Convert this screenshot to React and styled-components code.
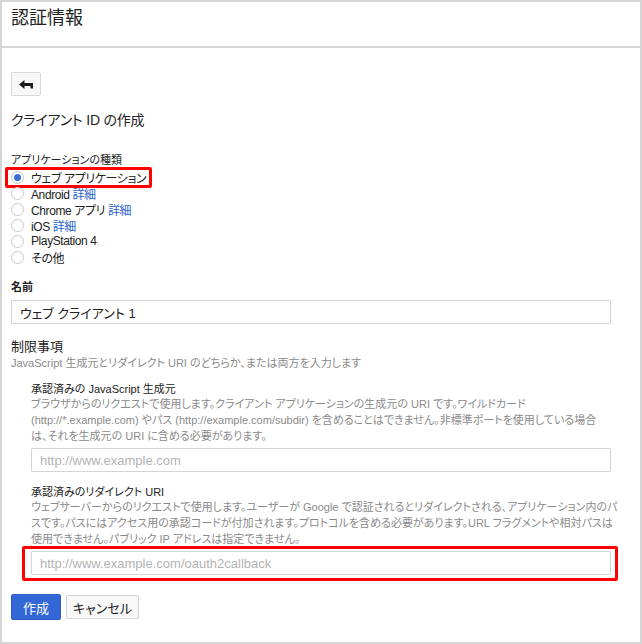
import React from "react";
import styled, { createGlobalStyle } from "styled-components";

const Global = createGlobalStyle`
  html, body { margin: 0; padding: 0; background: #fff; }
  body {
    font-family: "Liberation Sans", Arial, "Noto Sans CJK JP", sans-serif;
    color: #222;
    font-feature-settings: "palt";
  }
  * { box-sizing: border-box; }
  input, button { font-feature-settings: "palt"; }
`;

const Frame = styled.div`
  width: 642px;
  height: 644px;
  border: 2px solid #d6d6d6;
  display: flex;
  flex-direction: column;
`;

const Header = styled.header`
  height: 46px;
  border-bottom: 2px solid #d6d6d6;
  padding: 5px 0 0 9px;
`;

const Title = styled.h1`
  margin: 0;
  font-size: 18px;
  font-weight: 400;
  color: #222;
  line-height: 22px;
`;

const Body = styled.main`
  padding: 24px 30px 0 9px;
  display: flex;
  flex-direction: column;
`;

const BackButton = styled.button`
  width: 30px;
  height: 24px;
  border: 1px solid #d9d9d9;
  border-radius: 2px;
  background: #f8f8f8;
  display: flex;
  align-items: center;
  justify-content: center;
  padding: 0;
`;

const PageHeading = styled.h2`
  margin: 14px 0 0;
  font-size: 14px;
  font-weight: 400;
  line-height: 20px;
  letter-spacing: -0.2px;
`;

const Label = styled.div`
  font-size: 11px;
  font-weight: ${(p) => (p.$bold ? 700 : 400)};
  color: #222;
  line-height: 14px;
  margin-top: ${(p) => p.$mt || 0}px;
`;

const RadioGroup = styled.div`
  display: flex;
  flex-direction: column;
  margin-top: 2px;
`;

const RadioRow = styled.label`
  position: relative;
  display: flex;
  align-items: center;
  height: 16px;
  font-size: 12px;
  letter-spacing: -0.4px;
  color: #222;
  gap: 7px;
`;

const Highlight = styled.span`
  position: absolute;
  left: -6px;
  top: -2px;
  width: 147px;
  height: 21px;
  border: 3px solid #f00;
  border-radius: 2px;
  pointer-events: none;
`;

const Circle = styled.span`
  width: 13px;
  height: 13px;
  border-radius: 50%;
  border: 1px solid #c8c8c8;
  background: #fff;
  display: flex;
  align-items: center;
  justify-content: center;
  &::after {
    content: "";
    width: 7px;
    height: 7px;
    border-radius: 50%;
    background: ${(p) => (p.$checked ? "#3a6fd8" : "transparent")};
  }
`;

const Link = styled.span`
  color: #2a62c9;
`;

const TextInput = styled.input`
  width: ${(p) => p.$w || 600}px;
  height: 24px;
  border: 1px solid #d4d4d4;
  border-radius: 1px;
  padding: 0 8px;
  font-family: inherit;
  font-size: 13px;
  color: #222;
  margin-top: ${(p) => p.$mt || 0}px;
  outline: none;
  &::placeholder { color: #b3b3b3; }
`;

const SectionTitle = styled.div`
  font-size: 13px;
  margin-top: 15px;
  line-height: 16px;
`;

const Help = styled.div`
  font-size: 11px;
  color: #8a8a8a;
  line-height: 16px;
  white-space: nowrap;
`;

const Sub = styled.section`
  margin-left: 20px;
  margin-top: ${(p) => p.$mt}px;
  display: flex;
  flex-direction: column;
`;

const SubTitle = styled.div`
  font-size: 11px;
  color: #222;
  line-height: 13px;
`;

const RedBox = styled.div`
  margin: -1px 0 0 -9px;
  width: 596px;
  border: 3px solid #f00;
  border-radius: 2px;
  padding: 2px 4px 3px 6px;
`;

const Actions = styled.div`
  display: flex;
  gap: 5px;
  margin-top: 13px;
  align-items: flex-start;
`;

const Button = styled.button`
  width: ${(p) => (p.$primary ? 50 : 73)}px;
  height: ${(p) => (p.$primary ? 26 : 24)}px;
  margin-top: ${(p) => (p.$primary ? 0 : 1)}px;
  padding: 0;
  font-family: inherit;
  font-size: 13px;
  border-radius: 2px;
  border: 1px solid ${(p) => (p.$primary ? "#2c5ec4" : "#d4d4d4")};
  background: ${(p) => (p.$primary ? "#3367d6" : "#f8f8f8")};
  color: ${(p) => (p.$primary ? "#fff" : "#222")};
`;

const BackIcon = () => (
  <svg width="15" height="9" viewBox="0 0 15 9">
    <path d="M0 4.5 L5.5 0 V3 H14 V8.5 H11.5 V6 H5.5 V9 Z" fill="#1a1a1a" />
  </svg>
);

const types = [
  { t: "ウェブ アプリケーション", checked: true },
  { t: "Android ", link: "詳細" },
  { t: "Chrome アプリ ", link: "詳細" },
  { t: "iOS ", link: "詳細" },
  { t: "PlayStation 4" },
  { t: "その他" },
];

export default function App() {
  return (
    <>
      <Global />
      <Frame>
        <Header>
          <Title>認証情報</Title>
        </Header>
        <Body>
          <BackButton aria-label="戻る">
            <BackIcon />
          </BackButton>
          <PageHeading>クライアント ID の作成</PageHeading>
          <Label $mt={23}>アプリケーションの種類</Label>
          <RadioGroup>
            {types.map((r, i) => (
              <RadioRow key={i}>
                {r.checked && <Highlight />}
                <Circle $checked={r.checked} />
                <span>
                  {r.t}
                  {r.link && <Link>{r.link}</Link>}
                </span>
              </RadioRow>
            ))}
          </RadioGroup>
          <Label $bold $mt={15}>名前</Label>
          <TextInput $mt={6} defaultValue="ウェブ クライアント 1" />
          <SectionTitle>制限事項</SectionTitle>
          <Help>JavaScript 生成元とリダイレクト URI のどちらか、または両方を入力します</Help>
          <Sub $mt={12}>
            <SubTitle>承認済みの JavaScript 生成元</SubTitle>
            <Help>
              ブラウザからのリクエストで使用します。クライアント アプリケーションの生成元の URI です。ワイルドカード
              <br />
              (http://*.example.com) やパス (http://example.com/subdir) を含めることはできません。非標準ポートを使用している場合
              <br />
              は、それを生成元の URI に含める必要があります。
            </Help>
            <TextInput $w={580} $mt={4} placeholder="http://www.example.com" />
          </Sub>
          <Sub $mt={14}>
            <SubTitle>承認済みのリダイレクト URI</SubTitle>
            <Help>
              ウェブサーバーからのリクエストで使用します。ユーザーが Google で認証されるとリダイレクトされる、アプリケーション内のパ
              <br />
              スです。パスにはアクセス用の承認コードが付加されます。プロトコルを含める必要があります。URL フラグメントや相対パスは
              <br />
              使用できません。パブリック IP アドレスは指定できません。
            </Help>
            <RedBox>
              <TextInput $w={580} placeholder="http://www.example.com/oauth2callback" />
            </RedBox>
          </Sub>
          <Actions>
            <Button $primary>作成</Button>
            <Button>キャンセル</Button>
          </Actions>
        </Body>
      </Frame>
    </>
  );
}
